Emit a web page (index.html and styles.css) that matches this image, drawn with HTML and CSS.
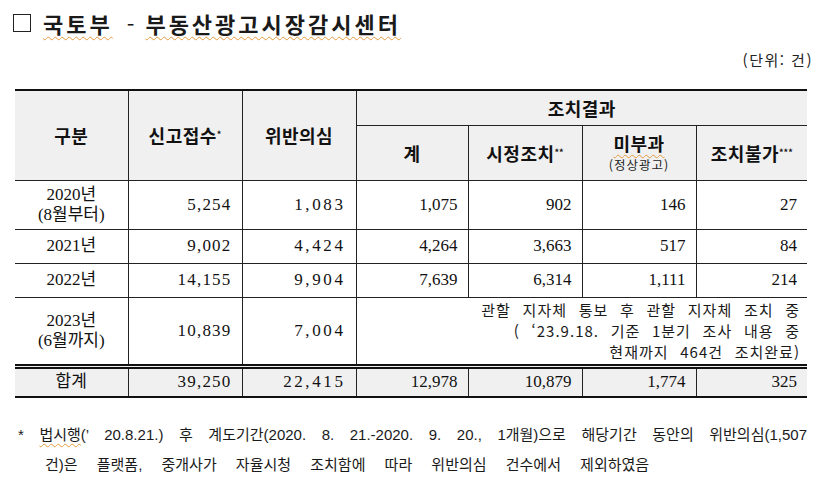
FILE: index.html
```html
<!DOCTYPE html>
<html lang="ko">
<head>
<meta charset="utf-8">
<link rel="stylesheet" href="styles.css">
</head>
<body>
<div class="page">
  <h1 class="title"><span class="box"></span><span class="spell">국토부</span><span class="dash">-</span><span class="spell">부동산광고시장감시센터</span></h1>
  <div class="unit">(단위: 건)</div>
  <table class="stats">
    <colgroup>
      <col class="c1"><col class="c2"><col class="c3"><col class="c4"><col class="c5"><col class="c6"><col class="c7">
    </colgroup>
    <thead>
      <tr class="h1">
        <th rowspan="2" class="first">구분</th>
        <th rowspan="2">신고접수<sup>*</sup></th>
        <th rowspan="2">위반의심</th>
        <th colspan="4" class="group">조치결과</th>
      </tr>
      <tr class="h2">
        <th>계</th>
        <th>시정조치<sup>**</sup></th>
        <th><span class="spell">미부과</span><span class="sub">(정상광고)</span></th>
        <th class="last">조치불가<sup>***</sup></th>
      </tr>
    </thead>
    <tbody>
      <tr class="r-tall">
        <td class="year first">2020년<br>(8월부터)</td>
        <td class="n n2">5,254</td><td class="n n3">1,083</td><td class="n">1,075</td><td class="n">902</td><td class="n">146</td><td class="n last">27</td>
      </tr>
      <tr class="r-std">
        <td class="year first">2021년</td>
        <td class="n n2">9,002</td><td class="n n3">4,424</td><td class="n">4,264</td><td class="n">3,663</td><td class="n">517</td><td class="n last">84</td>
      </tr>
      <tr class="r-std">
        <td class="year first">2022년</td>
        <td class="n n2">14,155</td><td class="n n3">9,904</td><td class="n">7,639</td><td class="n">6,314</td><td class="n">1,111</td><td class="n last">214</td>
      </tr>
      <tr class="r-note">
        <td class="year first">2023년<br>(6월까지)</td>
        <td class="n n2">10,839</td><td class="n n3">7,004</td>
        <td colspan="4" class="note last">관할 지자체 통보 후 관할 지자체 조치 중<br>( ‘23.9.18. 기준 1분기 조사 내용 중<br>현재까지 464건 조치완료)</td>
      </tr>
    </tbody>
    <tfoot>
      <tr class="r-total">
        <td class="year first">합계</td>
        <td class="n n2">39,250</td><td class="n n3">22,415</td><td class="n">12,978</td><td class="n">10,879</td><td class="n">1,774</td><td class="n last">325</td>
      </tr>
    </tfoot>
  </table>
  <div class="notes">
    <p class="line1">* <span class="spell">법시행</span>(’ 20.8.21.) 후 계도기간(2020. 8. 21.-2020. 9. 20., 1개월)으로 해당기간 동안의 위반의심(1,507</p>
    <p class="line2">건)은 플랫폼, 중개사가 자율시청 조치함에 따라 위반의심 건수에서 제외하였음</p>
  </div>
</div>
</body>
</html>
```

FILE: styles.css
```css
html, body {
  margin: 0;
  padding: 0;
  background: #ffffff;
}
body {
  width: 824px;
  height: 483px;
  overflow: hidden;
  color: #111;
  font-family: "Liberation Serif", "Noto Sans CJK KR", serif;
}
.page {
  padding: 0 17px 0 15px;
}
.title {
  margin: 0;
  padding-top: 7px;
  height: 32px;
  display: flex;
  align-items: center;
  font-family: "Noto Sans CJK KR", sans-serif;
  font-size: 22px;
  font-weight: 700;
  letter-spacing: 3px;
  line-height: 28px;
  color: #1a1a1a;
}
.box {
  display: inline-block;
  width: 16px;
  height: 16px;
  border: 1.5px solid #222;
  margin: 0 12px 0 -2px;
}
.dash {
  margin: 0 8px 0 14px;
  font-weight: 400;
}
.spell {
  text-decoration: underline wavy #e59a3c;
  text-decoration-thickness: 1px;
  text-underline-offset: 3px;
}
.unit {
  margin-top: 11px;
  height: 20px;
  text-align: right;
  margin-right: -6px;
  font-family: "Noto Sans CJK KR", sans-serif;
  font-size: 15px;
  line-height: 20px;
  letter-spacing: 1.5px;
  color: #222;
}
.stats {
  margin-top: 19px;
  width: 792px;
  border-collapse: collapse;
  table-layout: fixed;
  border-top: 2px solid #111;
  border-bottom: 2px solid #111;
}
.c1 { width: 113px; }
.c2 { width: 114px; }
.c3 { width: 114px; }
.c4 { width: 112px; }
.c5 { width: 114px; }
.c6 { width: 114px; }
.c7 { width: 111px; }
.stats th, .stats td {
  border: 1px solid #222;
  padding: 0;
}
.stats .first { border-left: none; }
.stats .last { border-right: none; }
.stats thead th {
  background: #f0f0f0;
  font-family: "Noto Sans CJK KR", sans-serif;
  font-size: 18px;
  font-weight: 700;
  letter-spacing: 0.5px;
  text-align: center;
  vertical-align: middle;
  line-height: 22px;
}
.stats .group {
  border-right: none;
}
.stats sup {
  font-size: 9px;
  vertical-align: 5px;
  letter-spacing: 0;
}
.h1 { height: 35px; }
.h2 { height: 55px; }
.sub {
  display: block;
  margin-top: 3px;
  font-size: 12.5px;
  font-weight: 400;
  line-height: 16px;
  letter-spacing: 1px;
  color: #222;
}
.stats td {
  font-size: 17px;
  line-height: 20px;
  vertical-align: middle;
}
.year {
  text-align: center;
}
.n {
  text-align: right;
  padding-right: 10px !important;
}
.n2 { letter-spacing: 1.2px; }
.n3 { letter-spacing: 2.6px; }
.r-tall { height: 49px; }
.r-std { height: 34px; }
.r-note { height: 69px; }
.r-note td { border-bottom: 5px double #111; }
.note {
  text-align: right;
  padding-right: 7px !important;
  font-family: "Noto Sans CJK KR", sans-serif;
  font-size: 15px !important;
  line-height: 21px !important;
  letter-spacing: 1px;
  word-spacing: 6.5px;
  color: #1a1a1a;
}
.r-total { height: 31px; }
.r-total td {
  background: #f0f0f0;
}
.notes {
  margin-top: 22px;
  font-family: "Liberation Sans", "Noto Sans CJK KR", sans-serif;
  font-size: 15px;
  color: #1a1a1a;
}
.notes p {
  margin: 0;
  height: 30px;
  line-height: 30px;
}
.line1 {
  margin-left: 3px !important;
  text-align: justify;
  text-align-last: justify;
}
.line2 {
  padding-left: 30px;
  word-spacing: 15px;
}
```
